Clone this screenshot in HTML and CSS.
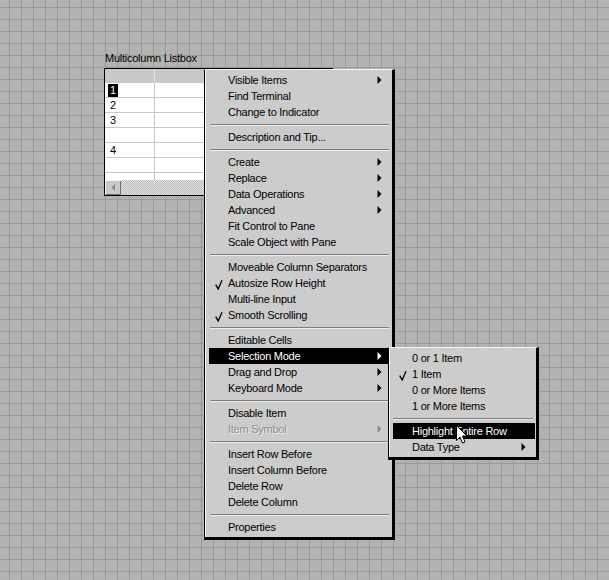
FILE: index.html
```html
<!DOCTYPE html>
<html>
<head>
<meta charset="utf-8">
<link rel="stylesheet" href="styles.css">
</head>
<body>
<div class="canvas">
  <div class="listbox">
    <div class="lb-label">Multicolumn Listbox</div>
    <div class="lb-frame">
      <div class="lb-row lb-head"><div class="c1"></div><div class="c2"></div></div>
      <div class="lb-row"><div class="c1"><span class="num sel">1</span></div><div class="c2"></div></div>
      <div class="lb-row"><div class="c1"><span class="num">2</span></div><div class="c2"></div></div>
      <div class="lb-row"><div class="c1"><span class="num">3</span></div><div class="c2"></div></div>
      <div class="lb-row"><div class="c1"></div><div class="c2"></div></div>
      <div class="lb-row"><div class="c1"><span class="num">4</span></div><div class="c2"></div></div>
      <div class="lb-row"><div class="c1"></div><div class="c2"></div></div>
      <div class="lb-row lb-partial"><div class="c1"></div><div class="c2"></div></div>
      <div class="lb-scroll">
        <div class="lb-btn"><svg width="5" height="7" viewBox="0 0 5 7"><path d="M4 0L0.5 3.5L4 7Z" fill="#8a8a8a"/></svg></div>
        <div class="lb-trough"></div>
      </div>
    </div>
  </div>

  <div class="menu main-menu">
    <div class="item"><span class="ck"></span><span class="lbl">Visible Items</span><svg class="arrow" width="5" height="8" viewBox="0 0 5 8"><path d="M0.5 0L4.5 4L0.5 8Z"/></svg></div>
    <div class="item"><span class="ck"></span><span class="lbl">Find Terminal</span></div>
    <div class="item"><span class="ck"></span><span class="lbl">Change to Indicator</span></div>
    <div class="sep"></div>
    <div class="item"><span class="ck"></span><span class="lbl">Description and Tip...</span></div>
    <div class="sep"></div>
    <div class="item"><span class="ck"></span><span class="lbl">Create</span><svg class="arrow" width="5" height="8" viewBox="0 0 5 8"><path d="M0.5 0L4.5 4L0.5 8Z"/></svg></div>
    <div class="item"><span class="ck"></span><span class="lbl">Replace</span><svg class="arrow" width="5" height="8" viewBox="0 0 5 8"><path d="M0.5 0L4.5 4L0.5 8Z"/></svg></div>
    <div class="item"><span class="ck"></span><span class="lbl">Data Operations</span><svg class="arrow" width="5" height="8" viewBox="0 0 5 8"><path d="M0.5 0L4.5 4L0.5 8Z"/></svg></div>
    <div class="item"><span class="ck"></span><span class="lbl">Advanced</span><svg class="arrow" width="5" height="8" viewBox="0 0 5 8"><path d="M0.5 0L4.5 4L0.5 8Z"/></svg></div>
    <div class="item"><span class="ck"></span><span class="lbl">Fit Control to Pane</span></div>
    <div class="item"><span class="ck"></span><span class="lbl">Scale Object with Pane</span></div>
    <div class="sep"></div>
    <div class="item"><span class="ck"></span><span class="lbl">Moveable Column Separators</span></div>
    <div class="item"><span class="ck"><svg width="8" height="10" viewBox="0 0 8 10"><path d="M0.7 4.6L3.2 9L7 0.3" fill="none" stroke="#000" stroke-width="1.3"/></svg></span><span class="lbl">Autosize Row Height</span></div>
    <div class="item"><span class="ck"></span><span class="lbl">Multi-line Input</span></div>
    <div class="item"><span class="ck"><svg width="8" height="10" viewBox="0 0 8 10"><path d="M0.7 4.6L3.2 9L7 0.3" fill="none" stroke="#000" stroke-width="1.3"/></svg></span><span class="lbl">Smooth Scrolling</span></div>
    <div class="sep"></div>
    <div class="item"><span class="ck"></span><span class="lbl">Editable Cells</span></div>
    <div class="item hl"><span class="ck"></span><span class="lbl">Selection Mode</span><svg class="arrow" width="5" height="8" viewBox="0 0 5 8"><path d="M0.5 0L4.5 4L0.5 8Z"/></svg></div>
    <div class="item"><span class="ck"></span><span class="lbl">Drag and Drop</span><svg class="arrow" width="5" height="8" viewBox="0 0 5 8"><path d="M0.5 0L4.5 4L0.5 8Z"/></svg></div>
    <div class="item"><span class="ck"></span><span class="lbl">Keyboard Mode</span><svg class="arrow" width="5" height="8" viewBox="0 0 5 8"><path d="M0.5 0L4.5 4L0.5 8Z"/></svg></div>
    <div class="sep"></div>
    <div class="item"><span class="ck"></span><span class="lbl">Disable Item</span></div>
    <div class="item dis"><span class="ck"></span><span class="lbl">Item Symbol</span><svg class="arrow" width="5" height="8" viewBox="0 0 5 8"><path d="M0.5 0L4.5 4L0.5 8Z"/></svg></div>
    <div class="sep"></div>
    <div class="item"><span class="ck"></span><span class="lbl">Insert Row Before</span></div>
    <div class="item"><span class="ck"></span><span class="lbl">Insert Column Before</span></div>
    <div class="item"><span class="ck"></span><span class="lbl">Delete Row</span></div>
    <div class="item"><span class="ck"></span><span class="lbl">Delete Column</span></div>
    <div class="sep"></div>
    <div class="item"><span class="ck"></span><span class="lbl">Properties</span></div>
  </div>

  <div class="menu sub-menu">
    <div class="item"><span class="ck"></span><span class="lbl">0 or 1 Item</span></div>
    <div class="item"><span class="ck"><svg width="8" height="10" viewBox="0 0 8 10"><path d="M0.7 4.6L3.2 9L7 0.3" fill="none" stroke="#000" stroke-width="1.3"/></svg></span><span class="lbl">1 Item</span></div>
    <div class="item"><span class="ck"></span><span class="lbl">0 or More Items</span></div>
    <div class="item"><span class="ck"></span><span class="lbl">1 or More Items</span></div>
    <div class="sep"></div>
    <div class="item hl"><span class="ck"></span><span class="lbl">Highlight Entire Row</span></div>
    <div class="item"><span class="ck"></span><span class="lbl">Data Type</span><svg class="arrow" width="5" height="8" viewBox="0 0 5 8"><path d="M0.5 0L4.5 4L0.5 8Z"/></svg></div>
  </div>

  <svg class="cursor" width="13" height="21" viewBox="0 0 13 21"><path d="M1.5 1.5L1.5 16.5L5 13L7.5 19L10 18L7.5 12L12 12Z" fill="#fff" stroke="#000" stroke-width="1" stroke-linejoin="miter"/></svg>
</div>
</body>
</html>
```
FILE: styles.css
```css
html, body {
  margin: 0;
  padding: 0;
  background: #b3b3b3;
}

.canvas {
  position: relative;
  width: 609px;
  height: 580px;
  overflow: hidden;
  background-color: #b3b3b3;
  background-image:
    linear-gradient(to right, #9a9a9a 1px, transparent 1px),
    linear-gradient(to bottom, #9a9a9a 1px, transparent 1px);
  background-size: 12px 12px;
  background-position: 9px 7px;
  font-family: "Liberation Sans", Arial, sans-serif;
  font-size: 11px;
  letter-spacing: -0.25px;
  color: #000;
}

/* ---------- listbox ---------- */
.listbox {
  position: absolute;
  left: 104px;
  top: 50px;
}

.lb-label {
  height: 16px;
  line-height: 16px;
  padding-left: 1px;
  margin-bottom: 2px;
}

.lb-frame {
  width: 227px;
  border: 1px solid #000;
  background: #fff;
}

.lb-row {
  display: grid;
  grid-template-columns: 50px 1fr;
  height: 14px;
  border-bottom: 1px solid #c8c8c8;
  background: #fff;
}

.lb-row .c1 {
  border-right: 1px solid #c8c8c8;
  padding-top: 1px;
}

.lb-head {
  background: #c9c9c9;
  border-bottom: none;
}

.lb-head .c1 {
  border-right: 1px solid #e4e4e4;
}

.lb-partial {
  height: 7px;
  border-bottom: none;
}

.num {
  display: inline-block;
  margin-left: 3px;
  padding: 0 2px;
  line-height: 13px;
  height: 13px;
}

.num.sel {
  background: #000;
  color: #fff;
}

.lb-scroll {
  display: flex;
  height: 15px;
}

.lb-btn {
  width: 16px;
  height: 15px;
  box-sizing: border-box;
  background: #c9c9c9;
  box-shadow: inset 1px 1px 0 #f2f2f2, inset -1px -1px 0 #6f6f6f;
  display: flex;
  align-items: center;
  padding-left: 6px;
}

.lb-btn svg {
  display: block;
}

.lb-trough {
  flex: 1;
  background-color: #d4d4d4;
  background-image: repeating-conic-gradient(#bcbcbc 0 25%, #e2e2e2 0 50%);
  background-size: 2px 2px;
}

/* ---------- menus ---------- */
.menu {
  position: absolute;
  background: #cccccc;
  border-top: 1px solid #f4f4f4;
  border-left: 1px solid #000;
  border-right: 3px solid #000;
  border-bottom: 3px solid #000;
  box-shadow: inset 1px 0 0 #f4f4f4;
  padding: 2px 1px 2px 4px;
}

.main-menu {
  left: 204px;
  top: 69px;
  width: 182px;
}

.sub-menu {
  left: 388px;
  top: 347px;
  width: 142px;
}

.item {
  display: grid;
  grid-template-columns: 19px 1fr 14px;
  height: 16px;
  line-height: 16px;
  white-space: nowrap;
}

.item .ck svg {
  display: block;
  margin: 5px 0 0 6px;
}

.item .arrow {
  display: block;
  margin-top: 4px;
  fill: #000;
  grid-column: 3;
}

.item.hl {
  background: #000;
  color: #fff;
}

.item.hl .arrow {
  fill: #fff;
}

.item.dis {
  color: #8e8e8e;
  text-shadow: 1px 1px 0 #ececec;
}

.item.dis .arrow {
  fill: #8e8e8e;
}

.sep {
  height: 1px;
  margin: 4px 2px 3px 1px;
  background: #7c7c7c;
  border-bottom: 1px solid #ececec;
}

.sub-menu .sep {
  margin-left: 0;
}

/* ---------- mouse cursor ---------- */
.cursor {
  position: absolute;
  left: 455px;
  top: 424px;
  display: block;
}
```
